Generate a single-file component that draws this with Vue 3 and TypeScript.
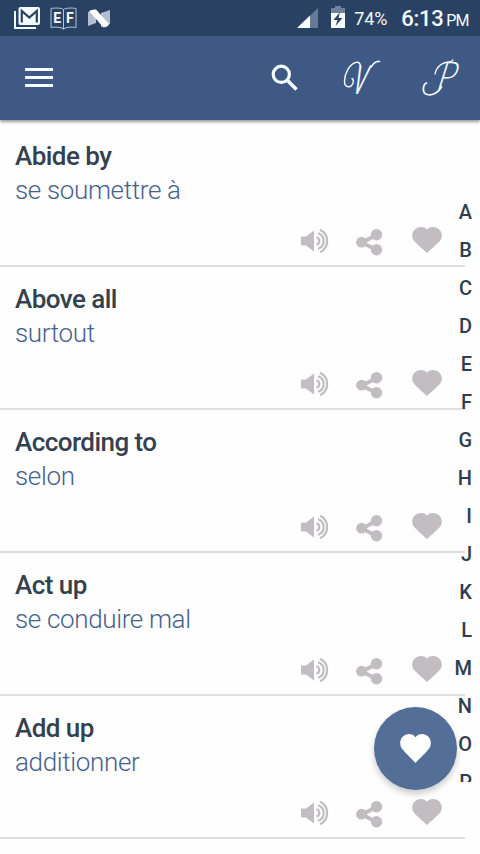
<script setup lang="ts">
interface Phrase {
  title: string
  translation: string
}

const phrases: Phrase[] = [
  { title: 'Abide by', translation: 'se soumettre à' },
  { title: 'Above all', translation: 'surtout' },
  { title: 'According to', translation: 'selon' },
  { title: 'Act up', translation: 'se conduire mal' },
  { title: 'Add up', translation: 'additionner' },
]

const letters: string[] = 'ABCDEFGHIJKLMNOP'.split('')
</script>

<template>
  <div class="screen">
    <header class="status">
      <div class="notices">
        <svg class="mail" width="27" height="23" viewBox="0 0 27 23">
          <path d="M1 4V21H22" fill="none" stroke="#f4fcff" stroke-width="2" />
          <rect x="4.500" y="0" width="21.500" height="18" rx="2" fill="#f4fcff" />
          <path d="M7.800 15.500V4L15.300 10.500L22.800 4V15.500" fill="none" stroke="#294163" stroke-width="2.200" />
        </svg>
        <div class="book">
          <svg width="27" height="23" viewBox="0 0 27 23" fill="none" stroke="#b4c5dc" stroke-width="1">
            <path d="M13.500 2.500C11.500 .8 5 .8 1 1.500V20.500C5 19.700 11 20 13.500 22C16 20 22 19.700 26 20.500V1.500C22 .8 15.500 .8 13.500 2.500V22" />
          </svg>
          <span class="book-text"><b>E</b><b>F</b></span>
        </div>
        <svg class="nougat" width="23" height="19" viewBox="0 0 23 19">
          <path d="M0 3L8 1V14L0 17Z" fill="#b5bed0" />
          <path d="M13 4L22 1V15L13 18Z" fill="#b5bed0" />
          <path d="M1 2Q4 0 8 .5L21 15Q20 18 15.500 18.500Z" fill="#fff" />
        </svg>
      </div>
      <div class="system">
        <svg class="signal" width="21" height="20" viewBox="0 0 21 20">
          <path d="M0 20L21 0V20Z" fill="#667b98" />
          <path d="M0 20L13 7.600V20Z" fill="#f7fdff" />
        </svg>
        <svg class="battery" width="14" height="22" viewBox="0 0 14 22">
          <path d="M0 7V2H4V0H10V2H14V7Z" fill="#71819a" />
          <path d="M0 7H14V22H0Z" fill="#f7fdff" />
          <path d="M9 6L2.500 14H6.500L4.500 20L11.500 12H7.500Z" fill="#294163" />
        </svg>
        <span class="percent">74%</span>
        <span class="clock">6:13</span>
        <span class="period">PM</span>
      </div>
    </header>

    <nav class="toolbar">
      <button class="menu" aria-label="Menu"><i></i><i></i><i></i></button>
      <div class="actions">
        <svg class="search" width="28" height="28" viewBox="0 0 28 28" fill="none" stroke="#f5fdff">
          <circle cx="10.300" cy="10.300" r="8.100" stroke-width="3.200" />
          <path d="M16.500 16.500L25.500 25.500" stroke-width="3.600" />
        </svg>
        <div class="script script-v">
          <span>V</span>
          <svg width="40" height="40" viewBox="0 0 40 40" fill="none" stroke="#f1faff" stroke-linecap="round">
            <path d="M18.500 9C18.500 5 16.500 3.500 13.500 4.500C8 6 2.500 15 2.500 23C2.500 30 9 30.500 11 25C11.600 23 11 21 10 20.500" stroke-width="1.400" />
            <path d="M29 9C32 4.500 34.500 2.500 37.500 3.500" stroke-width="1.700" />
          </svg>
        </div>
        <div class="script script-p">
          <span>P</span>
          <svg width="40" height="40" viewBox="0 0 40 40" fill="none" stroke="#f1faff" stroke-linecap="round">
            <path d="M15 16C16 10 21 4 30 4L33 2" stroke-width="1.300" />
            <path d="M21.500 29C18 35 12 38 7 36.500C2 35 2.500 27 6.500 25" stroke-width="1.800" />
          </svg>
        </div>
      </div>
    </nav>

    <main class="list">
      <article v-for="phrase in phrases" :key="phrase.title" class="entry">
        <h2>{{ phrase.title }}</h2>
        <p>{{ phrase.translation }}</p>
        <div class="tools">
          <svg class="sound" width="29" height="26" viewBox="0 0 29 26">
            <path d="M0 8.500H5L13 2.500V23.500L5 17.500H0Z" fill="#c1bdc0" />
            <g fill="none" stroke="#c1bdc0" stroke-width="2.200">
              <path d="M15.500 9.200A4 4 0 0 1 15.500 16.800" />
              <path d="M17 5.200A8.200 8.200 0 0 1 17 20.800" />
              <path d="M19 1.700A12.500 12.500 0 0 1 19 24.300" />
            </g>
          </svg>
          <svg class="share" width="27" height="27" viewBox="0 0 27 27" fill="#c1bdc0">
            <path d="M20.500 6L6 13.500L20.500 21" fill="none" stroke="#c1bdc0" stroke-width="4" />
            <circle cx="5.500" cy="13.200" r="5.400" />
            <circle cx="20.500" cy="5.800" r="5.700" />
            <circle cx="20.500" cy="20.700" r="5.700" />
          </svg>
          <svg class="heart" width="30" height="26" viewBox="0 0 30 26">
            <path d="M15 2.500C12.500-.2 8.200-.7 4.800 1C-.3 3.500-1.200 10 2.200 14C4 16.300 11 22.200 15 26C19 22.200 26 16.300 27.800 14C31.200 10 30.300 3.500 25.200 1C21.800-.7 17.500-.2 15 2.500Z" fill="#c1bdc0" />
          </svg>
        </div>
      </article>
    </main>

    <aside class="index">
      <span v-for="letter in letters" :key="letter">{{ letter }}</span>
    </aside>

    <button class="favorites" aria-label="Favorites">
      <svg width="31" height="29" viewBox="0 0 30 28">
        <path d="M15 3C12.500-.2 8.200-.7 4.800 1C-.3 3.500-1.200 10 2.200 14.500C4.500 17.500 11 23.800 15 28C19 23.800 25.500 17.500 27.800 14.500C31.200 10 30.300 3.500 25.200 1C21.800-.7 17.500-.2 15 3Z" fill="#fff" />
      </svg>
    </button>
  </div>
</template>

<style>
body {
  background: #fefefe;
}
</style>

<style scoped>
.screen {
  position: relative;
  width: 480px;
  height: 854px;
  overflow: hidden;
  background: #fefefe;
  font-family: Roboto, sans-serif;
}
button {
  padding: 0;
  border: 0;
  background: none;
}
svg {
  display: block;
  flex: none;
}
.status {
  display: flex;
  justify-content: space-between;
  height: 36px;
  background: #294163;
  color: #f7fdff;
}
.notices {
  display: flex;
  align-items: flex-start;
  padding: 7px 0 0 14px;
}
.book {
  position: relative;
  margin-left: 9px;
}
.book-text {
  position: absolute;
  inset: 3px 1px auto 1px;
  display: flex;
  justify-content: space-around;
  font: 500 14px/16px Roboto, sans-serif;
}
.book-text b {
  font-weight: 700;
}
.nougat {
  margin: 2px 0 0 11px;
}
.system {
  display: flex;
  align-items: flex-start;
  padding-right: 11px;
}
.signal {
  margin-top: 8px;
}
.battery {
  margin: 6px 9px 0 13px;
}
.percent {
  width: 47px;
  font-size: 18px;
  line-height: 38px;
}
.clock {
  width: 45px;
  font-size: 22px;
  font-weight: 500;
  line-height: 38px;
  letter-spacing: -0.200px;
}
.period {
  font-size: 16px;
  line-height: 41px;
  letter-spacing: -0.600px;
}
.toolbar {
  position: relative;
  display: flex;
  justify-content: space-between;
  height: 84px;
  padding: 0 20px 0 25px;
  background: #3e5984;
  box-shadow: 0 2px 3px rgba(0, 0, 0, 0.400);
}
.menu {
  display: flex;
  flex-direction: column;
  gap: 5px;
  height: 19px;
  margin-top: 32px;
}
.menu i {
  width: 28px;
  height: 3px;
  background: #f8feff;
}
.actions {
  display: flex;
  padding-top: 22px;
}
.search {
  margin: 6px 43px 0 0;
}
.script {
  position: relative;
  width: 40px;
  height: 40px;
}
.script span {
  position: absolute;
  top: 0;
  color: #f1faff;
  font: italic 400 40px/40px Lato, sans-serif;
  transform-origin: 0 100%;
}
.script svg {
  position: absolute;
  top: 0;
  left: 0;
}
.script-v {
  margin-right: 38px;
}
.script-v span {
  left: 8px;
  top: 1px;
  transform: skewX(-14deg) scaleX(0.500);
}
.script-p span {
  left: 15px;
  top: -3px;
  font-weight: 300;
  transform: skewX(-12deg) scaleX(0.850);
}
.list {
  padding-top: 4px;
}
.entry {
  width: 465px;
  height: 143px;
  padding: 15px 23px 0 15px;
  border-bottom: 2px solid #dedede;
  box-sizing: border-box;
}
h2,
p {
  margin: 0;
  line-height: 34px;
  white-space: nowrap;
}
h2 {
  color: #34414f;
  font-size: 26px;
  font-weight: 500;
  letter-spacing: -0.550px;
}
p {
  color: #48618c;
  font-size: 26px;
  font-weight: 300;
  letter-spacing: -0.350px;
}
.tools {
  display: flex;
  justify-content: flex-end;
  margin-top: 19px;
}
.sound {
  margin: 2px 26px 0 0;
}
.share {
  margin: 3px 29px 0 0;
}
.heart {
  margin-top: 1px;
}
.index {
  position: absolute;
  top: 193px;
  right: 8px;
  display: flex;
  flex-direction: column;
  height: 589px;
  overflow: hidden;
  color: #303d4d;
  font-size: 20px;
  font-weight: 500;
  line-height: 38px;
  text-align: right;
}
.index span {
  flex: none;
}
.favorites {
  position: absolute;
  top: 707px;
  left: 374px;
  display: grid;
  place-items: center;
  width: 83px;
  height: 83px;
  border-radius: 50%;
  background: #536e97;
  box-shadow: 0 4px 6px rgba(0, 0, 0, 0.200);
}
</style>
